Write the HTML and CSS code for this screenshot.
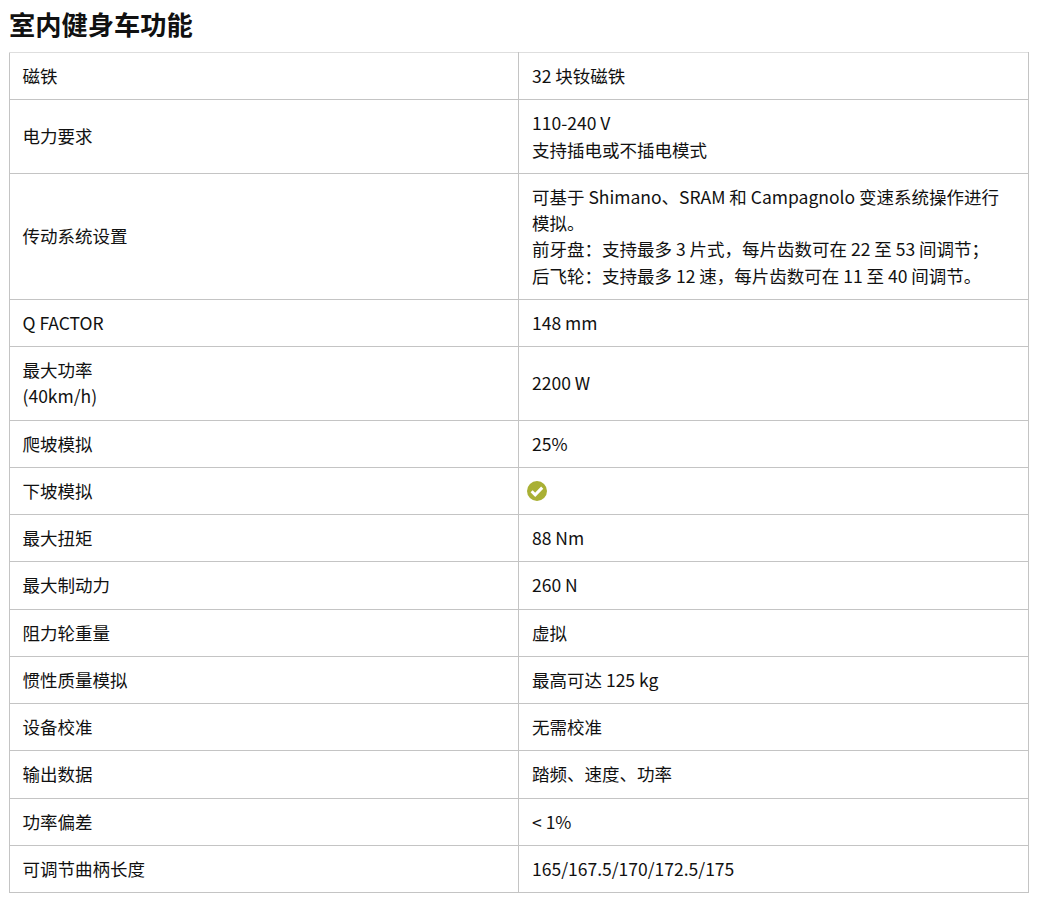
FILE: index.html
```html
<!DOCTYPE html>
<html lang="zh-CN">
<head>
<meta charset="utf-8">
<title>室内健身车功能</title>
<link rel="stylesheet" href="styles.css">
</head>
<body>
<h2 class="title">室内健身车功能</h2>
<table class="spec">
<tbody>
<tr><th>磁铁</th><td>32 块钕磁铁</td></tr>
<tr><th>电力要求</th><td>110-240 V<br>支持插电或不插电模式</td></tr>
<tr><th>传动系统设置</th><td>可基于 Shimano、SRAM 和 Campagnolo 变速系统操作进行模拟。<br>前牙盘：支持最多 3 片式，每片齿数可在 22 至 53 间调节；<br>后飞轮：支持最多 12 速，每片齿数可在 11 至 40 间调节。</td></tr>
<tr><th>Q FACTOR</th><td>148 mm</td></tr>
<tr><th>最大功率<br>(40km/h)</th><td>2200 W</td></tr>
<tr><th>爬坡模拟</th><td>25%</td></tr>
<tr><th>下坡模拟</th><td class="icon-cell"><svg class="check" viewBox="0 0 20 20" width="20" height="20"><circle cx="10" cy="10" r="10" fill="#a9b034"/><path d="M4.6 10.2l3.6 3.6 7-7.2" fill="none" stroke="#fff" stroke-width="3"/></svg></td></tr>
<tr><th>最大扭矩</th><td>88 Nm</td></tr>
<tr><th>最大制动力</th><td>260 N</td></tr>
<tr><th>阻力轮重量</th><td>虚拟</td></tr>
<tr><th>惯性质量模拟</th><td>最高可达 125 kg</td></tr>
<tr><th>设备校准</th><td>无需校准</td></tr>
<tr><th>输出数据</th><td>踏频、速度、功率</td></tr>
<tr><th>功率偏差</th><td>&lt; 1%</td></tr>
<tr><th>可调节曲柄长度</th><td>165/167.5/170/172.5/175</td></tr>
</tbody>
</table>
</body>
</html>
```
FILE: styles.css
```css
html, body { background: #fff; }
body {
  margin: 0;
  padding: 0 9px;
  font-family: "Noto Sans CJK SC", "Noto Sans", sans-serif;
  color: #111;
}
.title {
  margin: 0;
  height: 52px;
  font-size: 26.25px;
  line-height: 49px;
  font-weight: 700;
  color: #111;
}
.spec {
  width: 1020px;
  border-collapse: collapse;
  table-layout: fixed;
  font-size: 17.5px;
  line-height: 26.25px;
}
.spec th, .spec td {
  border: 1px solid #c4c4c4;
  padding: 10px 13px;
  text-align: left;
  font-weight: 400;
  vertical-align: middle;
}
.spec tr:first-child th, .spec tr:first-child td { border-top-color: #dedede; }
.spec th { width: 482.5px; padding-left: 12.5px; }
.spec .icon-cell { padding-left: 8px; }
.check { display: block; margin: 3px 0; }
```
